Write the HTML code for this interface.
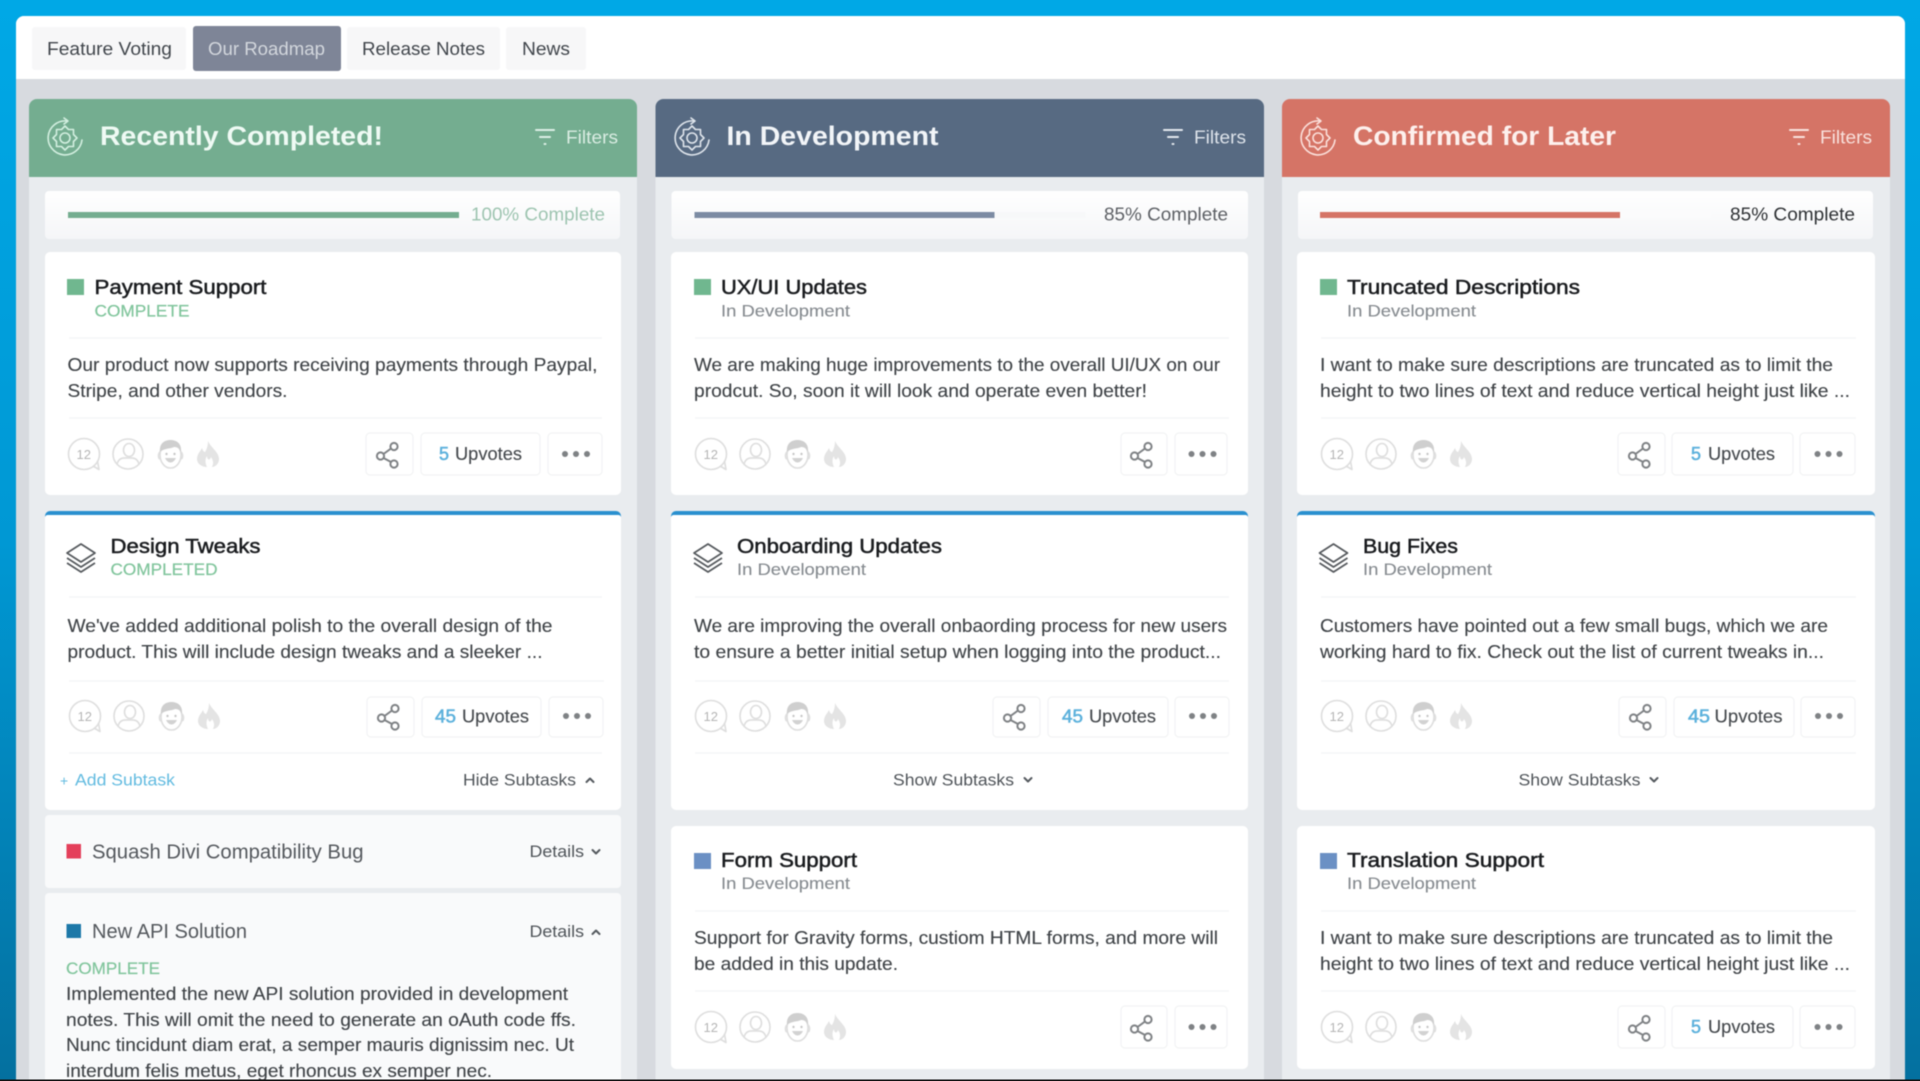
<!DOCTYPE html>
<html lang="en"><head><meta charset="utf-8"><title>Roadmap</title>
<style>
html,body{margin:0;padding:0;background:#04709f;width:1920px;height:1081px;overflow:hidden}
svg{display:block}
text{font-family:"Liberation Sans",sans-serif;white-space:pre}
.tab{font-size:18px;fill:#41464c}
.h{font-size:27px;font-weight:700}
.f{font-size:18px}
.t{font-size:20.5px;fill:#1a1c1f;stroke:#1a1c1f;stroke-width:.5}
.s{font-size:17px;fill:#868b90;stroke:#868b90;stroke-width:.12}
.g{font-size:17px;fill:#80c59c;stroke:#80c59c;stroke-width:.2}
.b{font-size:18px;fill:#3f4347;stroke:#3f4347;stroke-width:.12}
.u{font-size:18px;fill:#45494d;stroke:#45494d;stroke-width:.12}
.n{font-size:18px;fill:#5cb1dc;stroke:#5cb1dc;stroke-width:.55}
.p{font-size:18px}
.d{font-size:17px;fill:#4f5459}
.c{font-size:13px;fill:#b5b5b5}
.st{font-size:20px;fill:#54585d}
.card{fill:#fff}
.btn{fill:#fff;stroke:#f2f3f4;stroke-width:1.2}
.div{stroke:#f3f4f5;stroke-width:1.2}
</style></head><body>
<svg xmlns="http://www.w3.org/2000/svg" width="1920" height="1081" viewBox="0 0 1920 1081">
<defs>
<linearGradient id="bg" x1="0" y1="0" x2="0" y2="1"><stop offset="0" stop-color="#00a8e6"/><stop offset=".5" stop-color="#0098d4"/><stop offset="1" stop-color="#04709f"/></linearGradient>
<linearGradient id="pg" x1="0" y1="0" x2="0" y2="1"><stop offset="0" stop-color="#fff"/><stop offset="1" stop-color="#f5f6f8"/></linearGradient>
<g id="gear" fill="none" stroke-width="1.6" stroke-linejoin="round" stroke-linecap="round">
<path d="M2-17A17 17 0 1 0 17 2"/><path d="M-1-20L3-17L-1-14"/>
<path d="M12 0L8.500 3.500L8.500 8.500L3.500 8.500L0 12L-3.500 8.500L-8.500 8.500L-8.500 3.500L-12 0L-8.500-3.500L-8.500-8.500L-3.500-8.500L0-12L3.500-8.500L8.500-8.500L8.500-3.500Z"/>
<circle r="5"/>
</g>
<g id="filt" fill="none" stroke-width="2" stroke-linecap="round"><path d="M1-7H19M5 0H15M9.500 7H10.500"/></g>
<g id="row">
<g fill="none" stroke="#dedede" stroke-width="1.6"><circle cx="84" cy="0" r="15.500"/><path d="M93 12L99 15.500L97.500 7" stroke-linejoin="round"/>
<circle cx="128" cy="0" r="15"/><ellipse cx="129" cy="-4" rx="5.500" ry="6.500"/><path d="M117 10C119 3 124 4 128 4C132 4 137 3 139 10"/>
<ellipse cx="170.500" cy="1" rx="10.500" ry="13"/><path d="M160-2C158 0 158 4 160 5M181-2C183 0 183 4 181 5"/></g>
<path d="M160-2C159-11 165-14 170.500-14C176-14 182-11 181-2C179-6 177-7 174-7C170-5 164-6 160-2Z" fill="#cfcfcf"/>
<circle cx="166.500" cy="0" r="1.200" fill="#c8c8c8"/><circle cx="174.500" cy="0" r="1.200" fill="#c8c8c8"/><path d="M165 4C168 10 173 10 176 4Z" fill="#d2d2d2"/>
<path d="M208-13C211-6 219-2 219 5C219 10 215 13 212 13C214 9 213 6 211 3C210 7 207 6 207 2C205 5 205 9 207 13C202 13 197 10 197 5C197 0 200-2 202-6C203-3 204-2 205-2C207-5 208-9 208-13Z" fill="#e4e4e4"/>
</g>
<g id="sh" fill="none" stroke="#7f8285" stroke-width="2"><circle cx="6" cy="-8.500" r="3.600"/><circle cx="-7.500" cy="1" r="3.600"/><circle cx="6" cy="9" r="3.600"/><path d="M3-6.500L-4.500-1M-4.500 3L3 7"/></g>
<g id="dots" fill="#7f8285"><circle cx="-11" r="3"/><circle r="3"/><circle cx="11" r="3"/></g>
<g id="stack" fill="none" stroke="#55595d" stroke-width="1.7" stroke-linejoin="round"><path d="M14 0L28 9L14 18L0 9Z"/><path d="M0 14L14 23L28 14M0 19L14 28L28 19"/></g>
<g id="down" fill="none" stroke="#555a5f" stroke-width="2" stroke-linecap="round" stroke-linejoin="round"><path d="M-3.500-2L0 1.500L3.500-2"/></g>
<g id="up" fill="none" stroke="#555a5f" stroke-width="2" stroke-linecap="round" stroke-linejoin="round"><path d="M-3.500 2L0-1.500L3.500 2"/></g>
</defs>

<rect width="1920" height="1081" fill="url(#bg)"/>
<g style="filter:blur(.45px)">
<path d="M16 1085V24a8 8 0 0 1 8-8H1897a8 8 0 0 1 8 8V1085Z" fill="#d7dadf"/>
<path d="M16 79V24a8 8 0 0 1 8-8H1897a8 8 0 0 1 8 8V79Z" fill="#fff"/>

<!-- tabs -->
<rect x="32" y="27" width="154" height="43" rx="3" fill="#f7f7f8"/>
<rect x="193" y="26" width="148" height="45" rx="3" fill="#7e8597"/>
<rect x="347" y="27" width="153" height="43" rx="3" fill="#f7f7f8"/>
<rect x="506" y="27" width="80" height="43" rx="3" fill="#f7f7f8"/>
<text class="tab" x="47" y="55" textLength="125" lengthAdjust="spacingAndGlyphs">Feature Voting</text>
<text class="tab" x="208" y="55" textLength="117" lengthAdjust="spacingAndGlyphs" style="fill:#d3d7dd">Our Roadmap</text>
<text class="tab" x="362" y="55" textLength="123" lengthAdjust="spacingAndGlyphs">Release Notes</text>
<text class="tab" x="522" y="55" textLength="48" lengthAdjust="spacingAndGlyphs">News</text>

<!-- columns -->
<rect x="29" y="177" width="608" height="908" fill="#e9ecef"/>
<rect x="655.500" y="177" width="608.500" height="908" fill="#e9ecef"/>
<rect x="1282" y="177" width="608" height="908" fill="#e9ecef"/>
<path d="M29 177V107a8 8 0 0 1 8-8H629a8 8 0 0 1 8 8V177Z" fill="#74ad90"/>
<path d="M655.500 177V107a8 8 0 0 1 8-8H1256a8 8 0 0 1 8 8V177Z" fill="#576a82"/>
<path d="M1282 177V107a8 8 0 0 1 8-8H1882a8 8 0 0 1 8 8V177Z" fill="#d57466"/>

<use href="#gear" x="65" y="138" stroke="#d3efe0"/>
<use href="#gear" x="692" y="138" stroke="#dfe5ec"/>
<use href="#gear" x="1318" y="138" stroke="#fbe0db"/>
<text class="h" x="100" y="145" textLength="283" lengthAdjust="spacingAndGlyphs" fill="#effaf4">Recently Completed!</text>
<text class="h" x="726.500" y="145" textLength="212" lengthAdjust="spacingAndGlyphs" fill="#f2f5f8">In Development</text>
<text class="h" x="1353" y="145" textLength="263" lengthAdjust="spacingAndGlyphs" fill="#fdf0ed">Confirmed for Later</text>
<use href="#filt" x="535" y="137" stroke="#dcefe5"/>
<use href="#filt" x="1163" y="137" stroke="#e3e8ee"/>
<use href="#filt" x="1789" y="137" stroke="#fae3de"/>
<text class="f" x="566" y="143.500" textLength="52" lengthAdjust="spacingAndGlyphs" fill="#d9ece2">Filters</text>
<text class="f" x="1194" y="143.500" textLength="52" lengthAdjust="spacingAndGlyphs" fill="#dde3ea">Filters</text>
<text class="f" x="1820" y="143.500" textLength="52" lengthAdjust="spacingAndGlyphs" fill="#f8e0db">Filters</text>

<!-- progress -->
<rect x="45" y="191" width="575" height="48" rx="4" fill="url(#pg)"/>
<rect x="671.500" y="191" width="576.500" height="48" rx="4" fill="url(#pg)"/>
<rect x="1298" y="191" width="575" height="48" rx="4" fill="url(#pg)"/>
<rect x="68" y="212" width="391" height="6" fill="#74ad90"/>
<rect x="694.500" y="212" width="391" height="6" fill="#f7f8f9"/><rect x="694.500" y="212" width="300" height="6" fill="#7c8ba3"/>
<rect x="1320" y="212" width="391" height="6" fill="#fbfbfc"/><rect x="1320" y="212" width="300" height="6" fill="#d57466"/>
<text class="p" x="471" y="220.500" textLength="134" lengthAdjust="spacingAndGlyphs" fill="#9dc4b0">100% Complete</text>
<text class="p" x="1104" y="220.500" textLength="124" lengthAdjust="spacingAndGlyphs" fill="#5d6065">85% Complete</text>
<text class="p" x="1730" y="220.500" textLength="125" lengthAdjust="spacingAndGlyphs" fill="#2e3134">85% Complete</text>

<!-- COLUMN 1 card 1 -->
<rect class="card" x="45" y="252" width="576" height="243" rx="5"/>
<rect x="67" y="279" width="17" height="16" fill="#70b78f"/>
<text class="t" x="94.500" y="294" textLength="172" lengthAdjust="spacingAndGlyphs">Payment Support</text>
<text class="g" x="94.500" y="316.500" textLength="95" lengthAdjust="spacingAndGlyphs">COMPLETE</text>
<line class="div" x1="69" x2="602" y1="338" y2="338"/>
<text class="b" x="67.500" y="371" textLength="530" lengthAdjust="spacingAndGlyphs">Our product now supports receiving payments through Paypal,</text>
<text class="b" x="67.500" y="397" textLength="220" lengthAdjust="spacingAndGlyphs">Stripe, and other vendors.</text>
<line class="div" x1="69" x2="602" y1="418" y2="418"/>
<use href="#row" x="0" y="454"/><text class="c" x="76.500" y="459">12</text>
<rect class="btn" x="366" y="433" width="47" height="42" rx="4"/><use href="#sh" x="388" y="455"/>
<rect class="btn" x="421" y="433" width="119" height="42" rx="4"/>
<text class="n" x="439" y="460" textLength="10" lengthAdjust="spacingAndGlyphs">5</text>
<text class="u" x="455" y="460" textLength="67" lengthAdjust="spacingAndGlyphs">Upvotes</text>
<rect class="btn" x="548" y="433" width="54" height="42" rx="4"/><use href="#dots" x="576" y="454"/>

<!-- COLUMN 1 card 2 -->
<rect class="card" x="45" y="511" width="576" height="299" rx="5"/>
<path d="M45 517v-1a5 5 0 0 1 5-5H616a5 5 0 0 1 5 5v1a3 3 0 0 0-3-2H48a3 3 0 0 0-3 2Z" fill="#2a90cf"/>
<use href="#stack" x="67" y="544"/>
<text class="t" x="110.500" y="553" textLength="150" lengthAdjust="spacingAndGlyphs">Design Tweaks</text>
<text class="g" x="110.500" y="575" textLength="107" lengthAdjust="spacingAndGlyphs">COMPLETED</text>
<line class="div" x1="69" x2="602" y1="597" y2="597"/>
<text class="b" x="67.500" y="632" textLength="485" lengthAdjust="spacingAndGlyphs">We've added additional polish to the overall design of the</text>
<text class="b" x="67.500" y="658" textLength="475" lengthAdjust="spacingAndGlyphs">product. This will include design tweaks and a sleeker ...</text>
<line class="div" x1="69" x2="604" y1="681" y2="681"/>
<use href="#row" x="1" y="716"/><text class="c" x="77.500" y="721">12</text>
<rect class="btn" x="367" y="697" width="47" height="40" rx="4"/><use href="#sh" x="389" y="717"/>
<rect class="btn" x="422" y="697" width="119" height="40" rx="4"/>
<text class="n" x="435" y="722.500" textLength="21" lengthAdjust="spacingAndGlyphs">45</text>
<text class="u" x="462" y="722.500" textLength="67" lengthAdjust="spacingAndGlyphs">Upvotes</text>
<rect class="btn" x="549" y="697" width="54" height="40" rx="4"/><use href="#dots" x="577" y="716"/>
<line class="div" x1="69" x2="602" y1="753" y2="753"/>
<text x="60" y="785.500" font-size="14" fill="#62bbe0">+</text>
<text class="d" x="75" y="785.500" textLength="100" lengthAdjust="spacingAndGlyphs" style="fill:#62bbe0">Add Subtask</text>
<text class="d" x="463" y="785.500" textLength="113" lengthAdjust="spacingAndGlyphs">Hide Subtasks</text>
<use href="#up" x="590" y="780"/>

<!-- subtasks -->
<rect x="45" y="815" width="576" height="73" rx="4" fill="#f9fafb"/>
<rect x="66.500" y="844" width="14.500" height="14.500" fill="#e43f5a"/>
<text class="st" x="92" y="858.500" textLength="271.500" lengthAdjust="spacingAndGlyphs">Squash Divi Compatibility Bug</text>
<text class="d" x="529.500" y="857" textLength="54.500" lengthAdjust="spacingAndGlyphs">Details</text>
<use href="#down" x="596" y="852"/>
<rect x="45" y="893" width="576" height="192" rx="4" fill="#f9fafb"/>
<rect x="66.500" y="924" width="14.500" height="14" fill="#1d78a8"/>
<text class="st" x="92" y="938" textLength="155" lengthAdjust="spacingAndGlyphs">New API Solution</text>
<text class="d" x="529.500" y="937" textLength="54.500" lengthAdjust="spacingAndGlyphs">Details</text>
<use href="#up" x="596" y="932"/>
<text class="g" x="66" y="974" textLength="94" lengthAdjust="spacingAndGlyphs">COMPLETE</text>
<text class="b" x="66" y="1000" textLength="502" lengthAdjust="spacingAndGlyphs">Implemented the new API solution provided in development</text>
<text class="b" x="66" y="1026" textLength="510" lengthAdjust="spacingAndGlyphs">notes. This will omit the need to generate an oAuth code ffs.</text>
<text class="b" x="66" y="1051" textLength="508" lengthAdjust="spacingAndGlyphs">Nunc tincidunt diam erat, a semper mauris dignissim nec. Ut</text>
<text class="b" x="66" y="1077" textLength="426" lengthAdjust="spacingAndGlyphs">interdum felis metus, eget rhoncus ex semper nec.</text>

<!-- COLUMN 2 card 1 -->
<rect class="card" x="671" y="252" width="577" height="243" rx="5"/>
<rect x="694" y="279" width="17" height="16" fill="#70b78f"/>
<text class="t" x="721" y="294" textLength="146" lengthAdjust="spacingAndGlyphs">UX/UI Updates</text>
<text class="s" x="721" y="316.500" textLength="129" lengthAdjust="spacingAndGlyphs">In Development</text>
<line class="div" x1="695" x2="1229" y1="338" y2="338"/>
<text class="b" x="694" y="371" textLength="526" lengthAdjust="spacingAndGlyphs">We are making huge improvements to the overall UI/UX on our</text>
<text class="b" x="694" y="397" textLength="453" lengthAdjust="spacingAndGlyphs">prodcut. So, soon it will look and operate even better!</text>
<line class="div" x1="695" x2="1229" y1="418" y2="418"/>
<use href="#row" x="627" y="454"/><text class="c" x="703.500" y="459">12</text>
<rect class="btn" x="1121" y="433" width="46" height="42" rx="4"/><use href="#sh" x="1142" y="455"/>
<rect class="btn" x="1175" y="433" width="52" height="42" rx="4"/><use href="#dots" x="1202.500" y="454"/>

<!-- COLUMN 2 card 2 -->
<rect class="card" x="671" y="511" width="577" height="299" rx="5"/>
<path d="M671 517v-1a5 5 0 0 1 5-5H1243a5 5 0 0 1 5 5v1a3 3 0 0 0-3-2H674a3 3 0 0 0-3 2Z" fill="#2a90cf"/>
<use href="#stack" x="694" y="544"/>
<text class="t" x="737" y="553" textLength="205" lengthAdjust="spacingAndGlyphs">Onboarding Updates</text>
<text class="s" x="737" y="575" textLength="129" lengthAdjust="spacingAndGlyphs">In Development</text>
<line class="div" x1="695" x2="1229" y1="597" y2="597"/>
<text class="b" x="694" y="632" textLength="533" lengthAdjust="spacingAndGlyphs">We are improving the overall onbaording process for new users</text>
<text class="b" x="694" y="658" textLength="527" lengthAdjust="spacingAndGlyphs">to ensure a better initial setup when logging into the product...</text>
<line class="div" x1="695" x2="1229" y1="681" y2="681"/>
<use href="#row" x="627" y="716"/><text class="c" x="703.500" y="721">12</text>
<rect class="btn" x="993" y="697" width="47" height="40" rx="4"/><use href="#sh" x="1015" y="717"/>
<rect class="btn" x="1048" y="697" width="120" height="40" rx="4"/>
<text class="n" x="1062" y="722.500" textLength="21" lengthAdjust="spacingAndGlyphs">45</text>
<text class="u" x="1089" y="722.500" textLength="67" lengthAdjust="spacingAndGlyphs">Upvotes</text>
<rect class="btn" x="1175" y="697" width="54" height="40" rx="4"/><use href="#dots" x="1203" y="716"/>
<line class="div" x1="695" x2="1229" y1="753" y2="753"/>
<text class="d" x="893" y="785.500" textLength="121" lengthAdjust="spacingAndGlyphs">Show Subtasks</text>
<use href="#down" x="1028" y="780"/>

<!-- COLUMN 2 card 3 -->
<rect class="card" x="671" y="826" width="577" height="243" rx="5"/>
<rect x="694" y="853" width="17" height="16" fill="#6b90c4"/>
<text class="t" x="721" y="867" textLength="136" lengthAdjust="spacingAndGlyphs">Form Support</text>
<text class="s" x="721" y="889" textLength="129" lengthAdjust="spacingAndGlyphs">In Development</text>
<line class="div" x1="695" x2="1229" y1="911" y2="911"/>
<text class="b" x="694" y="944" textLength="524" lengthAdjust="spacingAndGlyphs">Support for Gravity forms, custiom HTML forms, and more will</text>
<text class="b" x="694" y="970" textLength="204" lengthAdjust="spacingAndGlyphs">be added in this update.</text>
<line class="div" x1="695" x2="1229" y1="991" y2="991"/>
<use href="#row" x="627" y="1027"/><text class="c" x="703.500" y="1032">12</text>
<rect class="btn" x="1121" y="1006" width="46" height="42" rx="4"/><use href="#sh" x="1142" y="1028"/>
<rect class="btn" x="1175" y="1006" width="52" height="42" rx="4"/><use href="#dots" x="1202.500" y="1027"/>

<!-- COLUMN 3 card 1 -->
<rect class="card" x="1297" y="252" width="578" height="243" rx="5"/>
<rect x="1320" y="279" width="17" height="16" fill="#70b78f"/>
<text class="t" x="1347" y="294" textLength="233" lengthAdjust="spacingAndGlyphs">Truncated Descriptions</text>
<text class="s" x="1347" y="316.500" textLength="129" lengthAdjust="spacingAndGlyphs">In Development</text>
<line class="div" x1="1321" x2="1856" y1="338" y2="338"/>
<text class="b" x="1320" y="371" textLength="513" lengthAdjust="spacingAndGlyphs">I want to make sure descriptions are truncated as to limit the</text>
<text class="b" x="1320" y="397" textLength="530" lengthAdjust="spacingAndGlyphs">height to two lines of text and reduce vertical height just like ...</text>
<line class="div" x1="1321" x2="1856" y1="418" y2="418"/>
<use href="#row" x="1253" y="454"/><text class="c" x="1329.500" y="459">12</text>
<rect class="btn" x="1618" y="433" width="47" height="42" rx="4"/><use href="#sh" x="1640" y="455"/>
<rect class="btn" x="1672" y="433" width="121" height="42" rx="4"/>
<text class="n" x="1691" y="460" textLength="10" lengthAdjust="spacingAndGlyphs">5</text>
<text class="u" x="1708" y="460" textLength="67" lengthAdjust="spacingAndGlyphs">Upvotes</text>
<rect class="btn" x="1800" y="433" width="55" height="42" rx="4"/><use href="#dots" x="1828.500" y="454"/>

<!-- COLUMN 3 card 2 -->
<rect class="card" x="1297" y="511" width="578" height="299" rx="5"/>
<path d="M1297 517v-1a5 5 0 0 1 5-5H1870a5 5 0 0 1 5 5v1a3 3 0 0 0-3-2H1300a3 3 0 0 0-3 2Z" fill="#2a90cf"/>
<use href="#stack" x="1319.500" y="544"/>
<text class="t" x="1363" y="553" textLength="95" lengthAdjust="spacingAndGlyphs">Bug Fixes</text>
<text class="s" x="1363" y="575" textLength="129" lengthAdjust="spacingAndGlyphs">In Development</text>
<line class="div" x1="1321" x2="1856" y1="597" y2="597"/>
<text class="b" x="1320" y="632" textLength="508" lengthAdjust="spacingAndGlyphs">Customers have pointed out a few small bugs, which we are</text>
<text class="b" x="1320" y="658" textLength="504" lengthAdjust="spacingAndGlyphs">working hard to fix. Check out the list of current tweaks in...</text>
<line class="div" x1="1321" x2="1856" y1="681" y2="681"/>
<use href="#row" x="1253" y="716"/><text class="c" x="1329.500" y="721">12</text>
<rect class="btn" x="1619" y="697" width="47" height="40" rx="4"/><use href="#sh" x="1641" y="717"/>
<rect class="btn" x="1674" y="697" width="120" height="40" rx="4"/>
<text class="n" x="1688" y="722.500" textLength="22" lengthAdjust="spacingAndGlyphs">45</text>
<text class="u" x="1714.500" y="722.500" textLength="68" lengthAdjust="spacingAndGlyphs">Upvotes</text>
<rect class="btn" x="1801" y="697" width="54" height="40" rx="4"/><use href="#dots" x="1829" y="716"/>
<line class="div" x1="1321" x2="1856" y1="753" y2="753"/>
<text class="d" x="1518.500" y="785.500" textLength="122" lengthAdjust="spacingAndGlyphs">Show Subtasks</text>
<use href="#down" x="1654" y="780"/>

<!-- COLUMN 3 card 3 -->
<rect class="card" x="1297" y="826" width="578" height="243" rx="5"/>
<rect x="1320" y="853" width="17" height="16" fill="#6b90c4"/>
<text class="t" x="1347" y="867" textLength="197" lengthAdjust="spacingAndGlyphs">Translation Support</text>
<text class="s" x="1347" y="889" textLength="129" lengthAdjust="spacingAndGlyphs">In Development</text>
<line class="div" x1="1321" x2="1856" y1="911" y2="911"/>
<text class="b" x="1320" y="944" textLength="513" lengthAdjust="spacingAndGlyphs">I want to make sure descriptions are truncated as to limit the</text>
<text class="b" x="1320" y="970" textLength="530" lengthAdjust="spacingAndGlyphs">height to two lines of text and reduce vertical height just like ...</text>
<line class="div" x1="1321" x2="1856" y1="991" y2="991"/>
<use href="#row" x="1253" y="1027"/><text class="c" x="1329.500" y="1032">12</text>
<rect class="btn" x="1618" y="1006" width="47" height="42" rx="4"/><use href="#sh" x="1640" y="1028"/>
<rect class="btn" x="1672" y="1006" width="121" height="42" rx="4"/>
<text class="n" x="1691" y="1033" textLength="10" lengthAdjust="spacingAndGlyphs">5</text>
<text class="u" x="1708" y="1033" textLength="67" lengthAdjust="spacingAndGlyphs">Upvotes</text>
<rect class="btn" x="1800" y="1006" width="55" height="42" rx="4"/><use href="#dots" x="1828.500" y="1027"/>
</g>
<rect x="0" y="1079.500" width="1920" height="1.500" fill="#111"/>
</svg>
</body></html>
